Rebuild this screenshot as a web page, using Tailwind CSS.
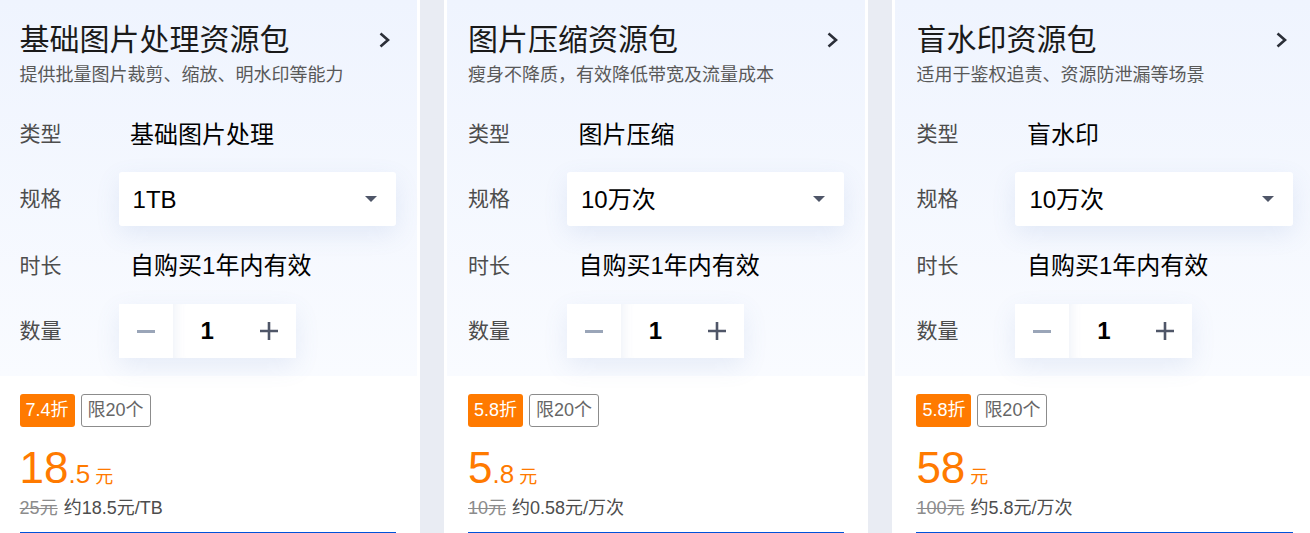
<!doctype html>
<html>
	<head>
		<meta charset="utf-8" />
		<title>资源包</title>
		<script src="https://cdn.jsdelivr.net/npm/@tailwindcss/browser@4"></script>
	</head>
	<body class="h-[533px] w-[1310px] overflow-hidden bg-[#e9ecf3] font-['Liberation_Sans','Noto_Sans_CJK_SC',sans-serif]">
		<div class="ml-[-4.4px] flex w-[1340px] gap-[24px]">
			<section class="h-[533px] w-[424.4px] shrink-0 bg-white">
				<div class="h-[376px] border-x-[3px] border-white bg-gradient-to-b from-[#eff4fe] to-[#f9fbff] px-[21px] pt-[20px]">
					<div class="flex items-center justify-between">
						<h3 class="text-[30px] leading-[40px] text-[#1a1a1a]">基础图片处理资源包</h3>
						<svg class="mr-[6px] h-[16px] w-[11px] text-[#2b2f38]" viewBox="0 0 11 16" fill="none" stroke="currentColor" stroke-width="2.6"><path d="M1.5 1.5L9 8l-7.5 6.5" /></svg>
					</div>
					<p class="mt-[3px] text-[18px] leading-[24px] text-[#595959]">提供批量图片裁剪、缩放、明水印等能力</p>
					<div class="mt-[26px] flex h-[44px] items-center">
						<span class="w-[110.5px] pb-[3px] text-[21px] text-[#4d4d4d]">类型</span>
						<span class="text-[24px] text-black">基础图片处理</span>
					</div>
					<div class="mt-[15px] flex h-[54px] items-center">
						<span class="w-[99px] text-[21px] text-[#4d4d4d]">规格</span>
						<div class="flex h-[54px] w-[277.4px] items-center justify-between rounded-[3px] bg-white pl-[14px] pr-[19px] text-[24px] text-black shadow-[0_8px_24px_rgba(90,120,190,0.12)]">
							<span class="pt-[2px]">1TB</span>
							<span class="border-x-[6px] border-t-[6px] border-x-transparent border-t-[#4f5668]"></span>
						</div>
					</div>
					<div class="mt-[13px] flex h-[54px] items-center">
						<span class="w-[110.5px] text-[21px] text-[#4d4d4d]">时长</span>
						<span class="text-[24px] text-black">自购买1年内有效</span>
					</div>
					<div class="mt-[11px] flex h-[54px] items-center">
						<span class="w-[99px] text-[21px] text-[#4d4d4d]">数量</span>
						<div class="flex h-[54px] items-center bg-white shadow-[0_8px_24px_rgba(90,120,190,0.12)]">
							<span class="flex h-[54px] w-[54px] items-center justify-center"><span class="h-[3px] w-[18px] bg-[#9aa5b8]"></span></span>
							<span class="flex h-[54px] w-[69px] items-center justify-center text-[24px] font-bold text-black shadow-[inset_14px_0_14px_-14px_rgba(90,120,190,0.14)]">1</span>
							<span class="flex h-[54px] w-[54px] items-center justify-center"><svg class="h-[18px] w-[18px]" viewBox="0 0 18 18" fill="none" stroke="#4f5668" stroke-width="2.6"><path d="M0 9h18M9 0v18" /></svg></span>
						</div>
					</div>
				</div>
				<div class="px-[24px] pt-[18px]">
					<div class="flex items-center gap-[6px]">
						<span class="flex h-[33px] w-[55px] items-center justify-center rounded-[3px] bg-[#ff7a00] text-[18px] text-white">7.4折</span>
						<span class="flex h-[33px] w-[70px] items-center justify-center rounded-[3px] border border-[#8c8c8c] text-[18px] text-[#666]">限20个</span>
					</div>
					<div class="mt-[18px] flex h-[46px] items-baseline text-[#ff7a00]">
						<span class="text-[44px] leading-[46px]">18</span><span class="text-[26px]">.5</span><span class="ml-[5px] text-[18px]">元</span>
					</div>
					<div class="mt-[4px] flex items-center gap-[6px] text-[18px] leading-[26px]">
						<s class="text-[#8c8c8c]">25元</s>
						<span class="text-[#4d4d4d]">约18.5元/TB</span>
					</div>
					<div class="mt-[11px] h-[1px] bg-[#0052d9]"></div>
				</div>
			</section>
			<section class="h-[533px] w-[424.4px] shrink-0 bg-white">
				<div class="h-[376px] border-x-[3px] border-white bg-gradient-to-b from-[#eff4fe] to-[#f9fbff] px-[21px] pt-[20px]">
					<div class="flex items-center justify-between">
						<h3 class="text-[30px] leading-[40px] text-[#1a1a1a]">图片压缩资源包</h3>
						<svg class="mr-[6px] h-[16px] w-[11px] text-[#2b2f38]" viewBox="0 0 11 16" fill="none" stroke="currentColor" stroke-width="2.6"><path d="M1.5 1.5L9 8l-7.5 6.5" /></svg>
					</div>
					<p class="mt-[3px] text-[18px] leading-[24px] text-[#595959]">瘦身不降质，有效降低带宽及流量成本</p>
					<div class="mt-[26px] flex h-[44px] items-center">
						<span class="w-[110.5px] pb-[3px] text-[21px] text-[#4d4d4d]">类型</span>
						<span class="text-[24px] text-black">图片压缩</span>
					</div>
					<div class="mt-[15px] flex h-[54px] items-center">
						<span class="w-[99px] text-[21px] text-[#4d4d4d]">规格</span>
						<div class="flex h-[54px] w-[277.4px] items-center justify-between rounded-[3px] bg-white pl-[14px] pr-[19px] text-[24px] text-black shadow-[0_8px_24px_rgba(90,120,190,0.12)]">
							<span class="pt-[2px]">10万次</span>
							<span class="border-x-[6px] border-t-[6px] border-x-transparent border-t-[#4f5668]"></span>
						</div>
					</div>
					<div class="mt-[13px] flex h-[54px] items-center">
						<span class="w-[110.5px] text-[21px] text-[#4d4d4d]">时长</span>
						<span class="text-[24px] text-black">自购买1年内有效</span>
					</div>
					<div class="mt-[11px] flex h-[54px] items-center">
						<span class="w-[99px] text-[21px] text-[#4d4d4d]">数量</span>
						<div class="flex h-[54px] items-center bg-white shadow-[0_8px_24px_rgba(90,120,190,0.12)]">
							<span class="flex h-[54px] w-[54px] items-center justify-center"><span class="h-[3px] w-[18px] bg-[#9aa5b8]"></span></span>
							<span class="flex h-[54px] w-[69px] items-center justify-center text-[24px] font-bold text-black shadow-[inset_14px_0_14px_-14px_rgba(90,120,190,0.14)]">1</span>
							<span class="flex h-[54px] w-[54px] items-center justify-center"><svg class="h-[18px] w-[18px]" viewBox="0 0 18 18" fill="none" stroke="#4f5668" stroke-width="2.6"><path d="M0 9h18M9 0v18" /></svg></span>
						</div>
					</div>
				</div>
				<div class="px-[24px] pt-[18px]">
					<div class="flex items-center gap-[6px]">
						<span class="flex h-[33px] w-[55px] items-center justify-center rounded-[3px] bg-[#ff7a00] text-[18px] text-white">5.8折</span>
						<span class="flex h-[33px] w-[70px] items-center justify-center rounded-[3px] border border-[#8c8c8c] text-[18px] text-[#666]">限20个</span>
					</div>
					<div class="mt-[18px] flex h-[46px] items-baseline text-[#ff7a00]">
						<span class="text-[44px] leading-[46px]">5</span><span class="text-[26px]">.8</span><span class="ml-[5px] text-[18px]">元</span>
					</div>
					<div class="mt-[4px] flex items-center gap-[6px] text-[18px] leading-[26px]">
						<s class="text-[#8c8c8c]">10元</s>
						<span class="text-[#4d4d4d]">约0.58元/万次</span>
					</div>
					<div class="mt-[11px] h-[1px] bg-[#0052d9]"></div>
				</div>
			</section>
			<section class="h-[533px] w-[424.4px] shrink-0 bg-white">
				<div class="h-[376px] border-x-[3px] border-white bg-gradient-to-b from-[#eff4fe] to-[#f9fbff] px-[21px] pt-[20px]">
					<div class="flex items-center justify-between">
						<h3 class="text-[30px] leading-[40px] text-[#1a1a1a]">盲水印资源包</h3>
						<svg class="mr-[6px] h-[16px] w-[11px] text-[#2b2f38]" viewBox="0 0 11 16" fill="none" stroke="currentColor" stroke-width="2.6"><path d="M1.5 1.5L9 8l-7.5 6.5" /></svg>
					</div>
					<p class="mt-[3px] text-[18px] leading-[24px] text-[#595959]">适用于鉴权追责、资源防泄漏等场景</p>
					<div class="mt-[26px] flex h-[44px] items-center">
						<span class="w-[110.5px] pb-[3px] text-[21px] text-[#4d4d4d]">类型</span>
						<span class="text-[24px] text-black">盲水印</span>
					</div>
					<div class="mt-[15px] flex h-[54px] items-center">
						<span class="w-[99px] text-[21px] text-[#4d4d4d]">规格</span>
						<div class="flex h-[54px] w-[277.4px] items-center justify-between rounded-[3px] bg-white pl-[14px] pr-[19px] text-[24px] text-black shadow-[0_8px_24px_rgba(90,120,190,0.12)]">
							<span class="pt-[2px]">10万次</span>
							<span class="border-x-[6px] border-t-[6px] border-x-transparent border-t-[#4f5668]"></span>
						</div>
					</div>
					<div class="mt-[13px] flex h-[54px] items-center">
						<span class="w-[110.5px] text-[21px] text-[#4d4d4d]">时长</span>
						<span class="text-[24px] text-black">自购买1年内有效</span>
					</div>
					<div class="mt-[11px] flex h-[54px] items-center">
						<span class="w-[99px] text-[21px] text-[#4d4d4d]">数量</span>
						<div class="flex h-[54px] items-center bg-white shadow-[0_8px_24px_rgba(90,120,190,0.12)]">
							<span class="flex h-[54px] w-[54px] items-center justify-center"><span class="h-[3px] w-[18px] bg-[#9aa5b8]"></span></span>
							<span class="flex h-[54px] w-[69px] items-center justify-center text-[24px] font-bold text-black shadow-[inset_14px_0_14px_-14px_rgba(90,120,190,0.14)]">1</span>
							<span class="flex h-[54px] w-[54px] items-center justify-center"><svg class="h-[18px] w-[18px]" viewBox="0 0 18 18" fill="none" stroke="#4f5668" stroke-width="2.6"><path d="M0 9h18M9 0v18" /></svg></span>
						</div>
					</div>
				</div>
				<div class="px-[24px] pt-[18px]">
					<div class="flex items-center gap-[6px]">
						<span class="flex h-[33px] w-[55px] items-center justify-center rounded-[3px] bg-[#ff7a00] text-[18px] text-white">5.8折</span>
						<span class="flex h-[33px] w-[70px] items-center justify-center rounded-[3px] border border-[#8c8c8c] text-[18px] text-[#666]">限20个</span>
					</div>
					<div class="mt-[18px] flex h-[46px] items-baseline text-[#ff7a00]">
						<span class="text-[44px] leading-[46px]">58</span><span class="ml-[5px] text-[18px]">元</span>
					</div>
					<div class="mt-[4px] flex items-center gap-[6px] text-[18px] leading-[26px]">
						<s class="text-[#8c8c8c]">100元</s>
						<span class="text-[#4d4d4d]">约5.8元/万次</span>
					</div>
					<div class="mt-[11px] h-[1px] bg-[#0052d9]"></div>
				</div>
			</section>
		</div>
	</body>
</html>
